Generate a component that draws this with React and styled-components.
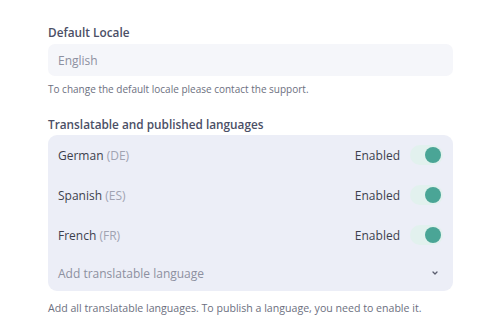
import React, { useState } from "react";
import styled, { createGlobalStyle } from "styled-components";

const Global = createGlobalStyle`
  body {
    margin: 0;
    background: #ffffff;
    font-family: "Open Sans", "Noto Sans", sans-serif;
  }
`;

const Page = styled.div`
  padding: 24px 47px 0 48px;
  width: 500px;
  box-sizing: border-box;
`;

const Label = styled.div`
  font-size: 11.8px;
  font-weight: 600;
  line-height: 16px;
  color: #4b4f66;
  margin-top: ${(p) => p.top || 0}px;
`;

const Input = styled.div`
  margin-top: 4px;
  height: 32px;
  border-radius: 7px;
  background: #f5f6fa;
  display: flex;
  align-items: center;
  padding: 0 10px;
  font-size: 12px;
  color: #8d90a0;
`;

const Help = styled.div`
  margin-top: ${(p) => p.top}px;
  font-size: ${(p) => p.size}px;
  line-height: 14px;
  color: #6c6f80;
`;

const Panel = styled.div`
  margin-top: 3px;
  background: #eceef7;
  border-radius: 9px;
`;

const Row = styled.div`
  height: ${(p) => p.h || 40}px;
  display: flex;
  align-items: center;
  padding: 0 10px;
  font-size: 12px;
  color: #3c3f4d;
`;

const Name = styled.span`
  flex: 1;
`;

const Code = styled.span`
  color: #a0a3b2;
`;

const Status = styled.span`
  margin-right: 10px;
  color: #3c3f4d;
`;

const Track = styled.button`
  width: 33px;
  height: 20px;
  border: none;
  padding: 0;
  border-radius: 10px;
  background: ${(p) => (p.on ? "#e2f1ee" : "#dcdfe8")};
  position: relative;
  cursor: pointer;
`;

const Knob = styled.span`
  position: absolute;
  top: 2px;
  left: ${(p) => (p.on ? 15 : 2)}px;
  width: 16px;
  height: 16px;
  border-radius: 50%;
  background: ${(p) => (p.on ? "#4aa596" : "#ffffff")};
`;

const Placeholder = styled.span`
  flex: 1;
  color: #8d90a0;
`;

const languages = [
  { name: "German", code: "DE" },
  { name: "Spanish", code: "ES" },
  { name: "French", code: "FR" },
];

function Toggle() {
  const [on, setOn] = useState(true);
  return (
    <Track on={on ? 1 : 0} onClick={() => setOn(!on)}>
      <Knob on={on ? 1 : 0} />
    </Track>
  );
}

export default function App() {
  return (
    <Page>
      <Global />
      <Label>Default Locale</Label>
      <Input>English</Input>
      <Help top={6} size={10}>
        To change the default locale please contact the support.
      </Help>
      <Label top={20}>Translatable and published languages</Label>
      <Panel>
        {languages.map((l) => (
          <Row key={l.code}>
            <Name>
              {l.name} <Code>({l.code})</Code>
            </Name>
            <Status>Enabled</Status>
            <Toggle />
          </Row>
        ))}
        <Row h={36}>
          <Placeholder>Add translatable language</Placeholder>
          <svg width="10" height="10" viewBox="0 0 10 10" style={{ marginRight: 3 }}>
            <path d="M3 4 L5 6 L7 4" fill="none" stroke="#5a5d6e" strokeWidth="1.3" strokeLinecap="round" strokeLinejoin="round" />
          </svg>
        </Row>
      </Panel>
      <Help top={10} size={10.6}>
        Add all translatable languages. To publish a language, you need to enable it.
      </Help>
    </Page>
  );
}
